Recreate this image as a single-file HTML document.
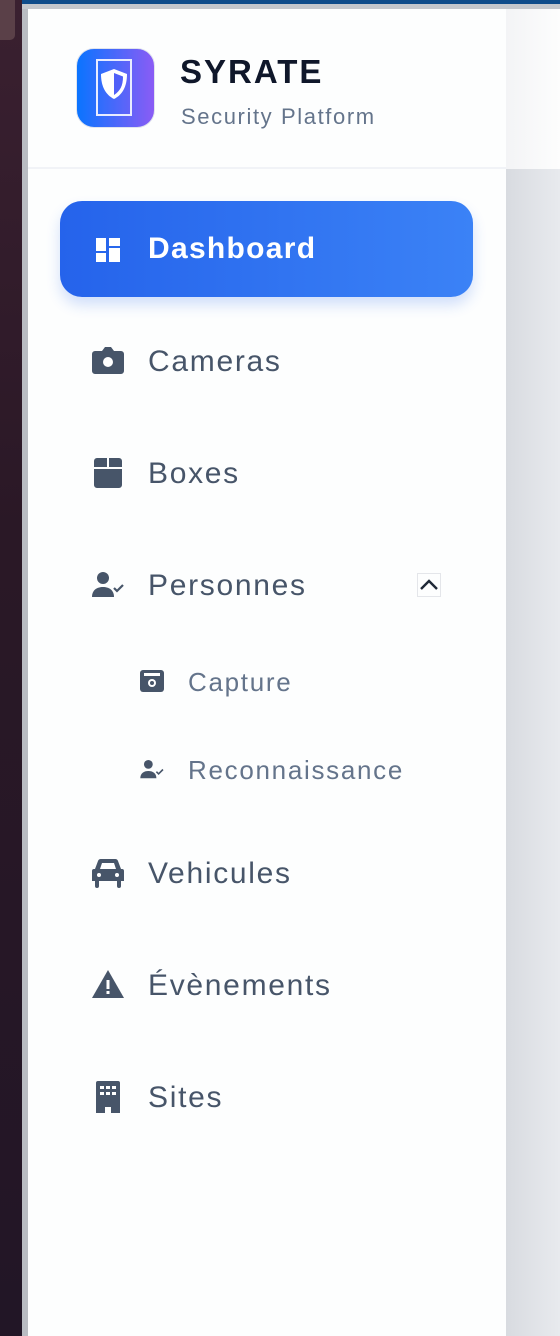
<!DOCTYPE html>
<html><head><meta charset="utf-8"><style>
*{margin:0;padding:0;box-sizing:border-box}
body{width:560px;height:1336px;overflow:hidden;background:#e5e7eb;font-family:"Liberation Sans",sans-serif;position:relative}
.ls{position:absolute;left:0;top:0;width:22px;height:1336px;background:linear-gradient(#3a2030,#2a1826 40%,#221626)}
.ls2{position:absolute;left:0;top:0;width:15px;height:40px;background:#5a4048;border-radius:0 0 5px 0}
.gb{position:absolute;left:22px;top:0;width:6px;height:1336px;background:#b9bcc2}
.top{position:absolute;left:22px;top:0;right:0;height:4px;background:#0f4c8a}
.top2{position:absolute;left:22px;top:4px;right:0;height:5px;background:#c4c7cc}
.right{position:absolute;left:506px;top:9px;right:0;height:1327px;background:linear-gradient(90deg,#d8dbe0,#e8eaee)}
.rh{position:absolute;left:506px;top:9px;right:0;height:160px;background:linear-gradient(90deg,#f3f4f6,#fdfdfd)}
.side{position:absolute;left:28px;top:9px;width:478px;height:1327px;background:#fdfefe}
.hdr{position:absolute;left:28px;top:9px;width:478px;height:160px;border-bottom:2px solid #f1f3f7}
.logo{position:absolute;left:76px;top:48px;width:79px;height:80px;border-radius:18px;background:linear-gradient(90deg,#0a74ff,#8a5cf5);border:1px solid #e0e4ee}
.t1{position:absolute;left:180px;top:53px;font-size:33px;font-weight:bold;color:#0f172a;letter-spacing:2px}
.t2{position:absolute;left:181px;top:104px;font-size:22px;color:#64748b;letter-spacing:1.6px}
.dash{position:absolute;left:60px;top:201px;width:413px;height:96px;border-radius:22px;background:linear-gradient(90deg,#2563eb,#3b82f6);box-shadow:0 8px 14px rgba(37,99,235,.2)}
.item{position:absolute;left:148px;font-size:30px;color:#475569;line-height:36px;letter-spacing:1.7px}
.sub{position:absolute;left:188px;font-size:26px;color:#64748b;line-height:32px;letter-spacing:1.7px}
svg{position:absolute}
</style></head><body>
<div class="ls"></div><div class="ls2"></div><div class="gb"></div>
<div class="top"></div><div class="top2"></div>
<div class="right"></div><div class="rh"></div>
<div class="side"></div><div class="hdr"></div>
<div class="logo">
<svg style="left:19px;top:10px" width="36" height="57" viewBox="0 0 36 57"><rect x="1" y="1" width="34" height="55" fill="none" stroke="#e8ecff" stroke-width="2"/><path d="M18 10 L31 15 C31 28 26 36 18 40 C10 36 5 28 5 15 Z" fill="#fff"/><path d="M18 14 L27 17.5 C27 27 24 32 18 36 Z" fill="#5060f8"/></svg>
</div>
<div class="t1">SYRATE</div>
<div class="t2">Security Platform</div>
<div class="dash">
<svg style="left:36px;top:37px" width="24" height="24" viewBox="0 0 24 24"><rect x="0" y="0" width="10" height="13" fill="#fff"/><rect x="13" y="0" width="11" height="8" fill="#fff"/><rect x="0" y="15" width="10" height="9" fill="#fff"/><rect x="13" y="10" width="11" height="14" fill="#fff"/></svg>
<div style="position:absolute;left:88px;top:31px;font-size:30px;font-weight:bold;color:#fff;letter-spacing:1.3px">Dashboard</div>
</div>
<svg style="left:92px;top:346px" width="32" height="30" viewBox="0 0 32 30"><path d="M3 5h7l3-4h6l3 4h7a3 3 0 0 1 3 3v17a3 3 0 0 1-3 3H3a3 3 0 0 1-3-3V8a3 3 0 0 1 3-3z" fill="#475569"/><circle cx="16" cy="16" r="5" fill="#fff"/></svg>
<div class="item" style="top:344px">Cameras</div>
<svg style="left:94px;top:458px" width="28" height="30" viewBox="0 0 28 30"><path d="M3 0h10v9H0V3a3 3 0 0 1 3-3z M15 0h10a3 3 0 0 1 3 3v6H15z M0 11h28v16a3 3 0 0 1-3 3H3a3 3 0 0 1-3-3z" fill="#475569"/></svg>
<div class="item" style="top:456px">Boxes</div>
<svg style="left:92px;top:572px" width="32" height="26" viewBox="0 0 32 26"><circle cx="11" cy="6" r="6" fill="#475569"/><path d="M0 25c0-7 5-10 11-10s11 3 11 10z" fill="#475569"/><path d="M22 16l3 3 6-6" fill="none" stroke="#475569" stroke-width="2.2"/></svg>
<div class="item" style="top:568px">Personnes</div>
<svg style="left:417px;top:573px" width="24" height="24" viewBox="0 0 24 24"><rect x="0.5" y="0.5" width="23" height="23" fill="none" stroke="#e4e6ea"/><path d="M4 16l8-8 8 8" fill="none" stroke="#1f2937" stroke-width="2.4"/></svg>
<svg style="left:140px;top:670px" width="24" height="22" viewBox="0 0 24 22"><path d="M3 0h18a3 3 0 0 1 3 3v16a3 3 0 0 1-3 3H3a3 3 0 0 1-3-3V3a3 3 0 0 1 3-3z" fill="#475569"/><rect x="4" y="3" width="16" height="3" fill="#fff"/><circle cx="12" cy="13" r="4" fill="#fff"/><circle cx="12" cy="13" r="2" fill="#475569"/></svg>
<div class="sub" style="top:666px">Capture</div>
<svg style="left:140px;top:760px" width="24" height="19" viewBox="0 0 32 26"><circle cx="11" cy="6" r="6" fill="#475569"/><path d="M0 25c0-7 5-10 11-10s11 3 11 10z" fill="#475569"/><path d="M22 16l3 3 6-6" fill="none" stroke="#475569" stroke-width="2.2"/></svg>
<div class="sub" style="top:754px">Reconnaissance</div>
<svg style="left:92px;top:858px" width="32" height="30" viewBox="0 0 32 30"><path d="M6 3a3 3 0 0 1 3-2h14a3 3 0 0 1 3 2l3 8h1a2 2 0 0 1 2 2v10h-3v5a2 2 0 0 1-4 0v-5H7v5a2 2 0 0 1-4 0v-5H0V13a2 2 0 0 1 2-2h1z" fill="#475569"/><path d="M8 11l2-6h12l2 6z" fill="#fff"/><circle cx="7" cy="17" r="2" fill="#fff"/><circle cx="25" cy="17" r="2" fill="#fff"/></svg>
<div class="item" style="top:856px">Vehicules</div>
<svg style="left:92px;top:970px" width="32" height="29" viewBox="0 0 32 29"><path d="M16 0l16 28H0z" fill="#475569"/><rect x="14.5" y="10" width="3" height="9" fill="#fff"/><rect x="14.5" y="21" width="3" height="3" fill="#fff"/></svg>
<div class="item" style="top:968px">Évènements</div>
<svg style="left:96px;top:1081px" width="24" height="32" viewBox="0 0 24 32"><path d="M2 0h20a2 2 0 0 1 2 2v30H15v-6h-6v6H0V2a2 2 0 0 1 2-2z" fill="#475569"/><g fill="#fff"><rect x="4" y="5" width="4" height="3"/><rect x="10" y="5" width="4" height="3"/><rect x="16" y="5" width="4" height="3"/><rect x="4" y="11" width="4" height="3"/><rect x="10" y="11" width="4" height="3"/><rect x="16" y="11" width="4" height="3"/></g></svg>
<div class="item" style="top:1080px">Sites</div>
</body></html>
